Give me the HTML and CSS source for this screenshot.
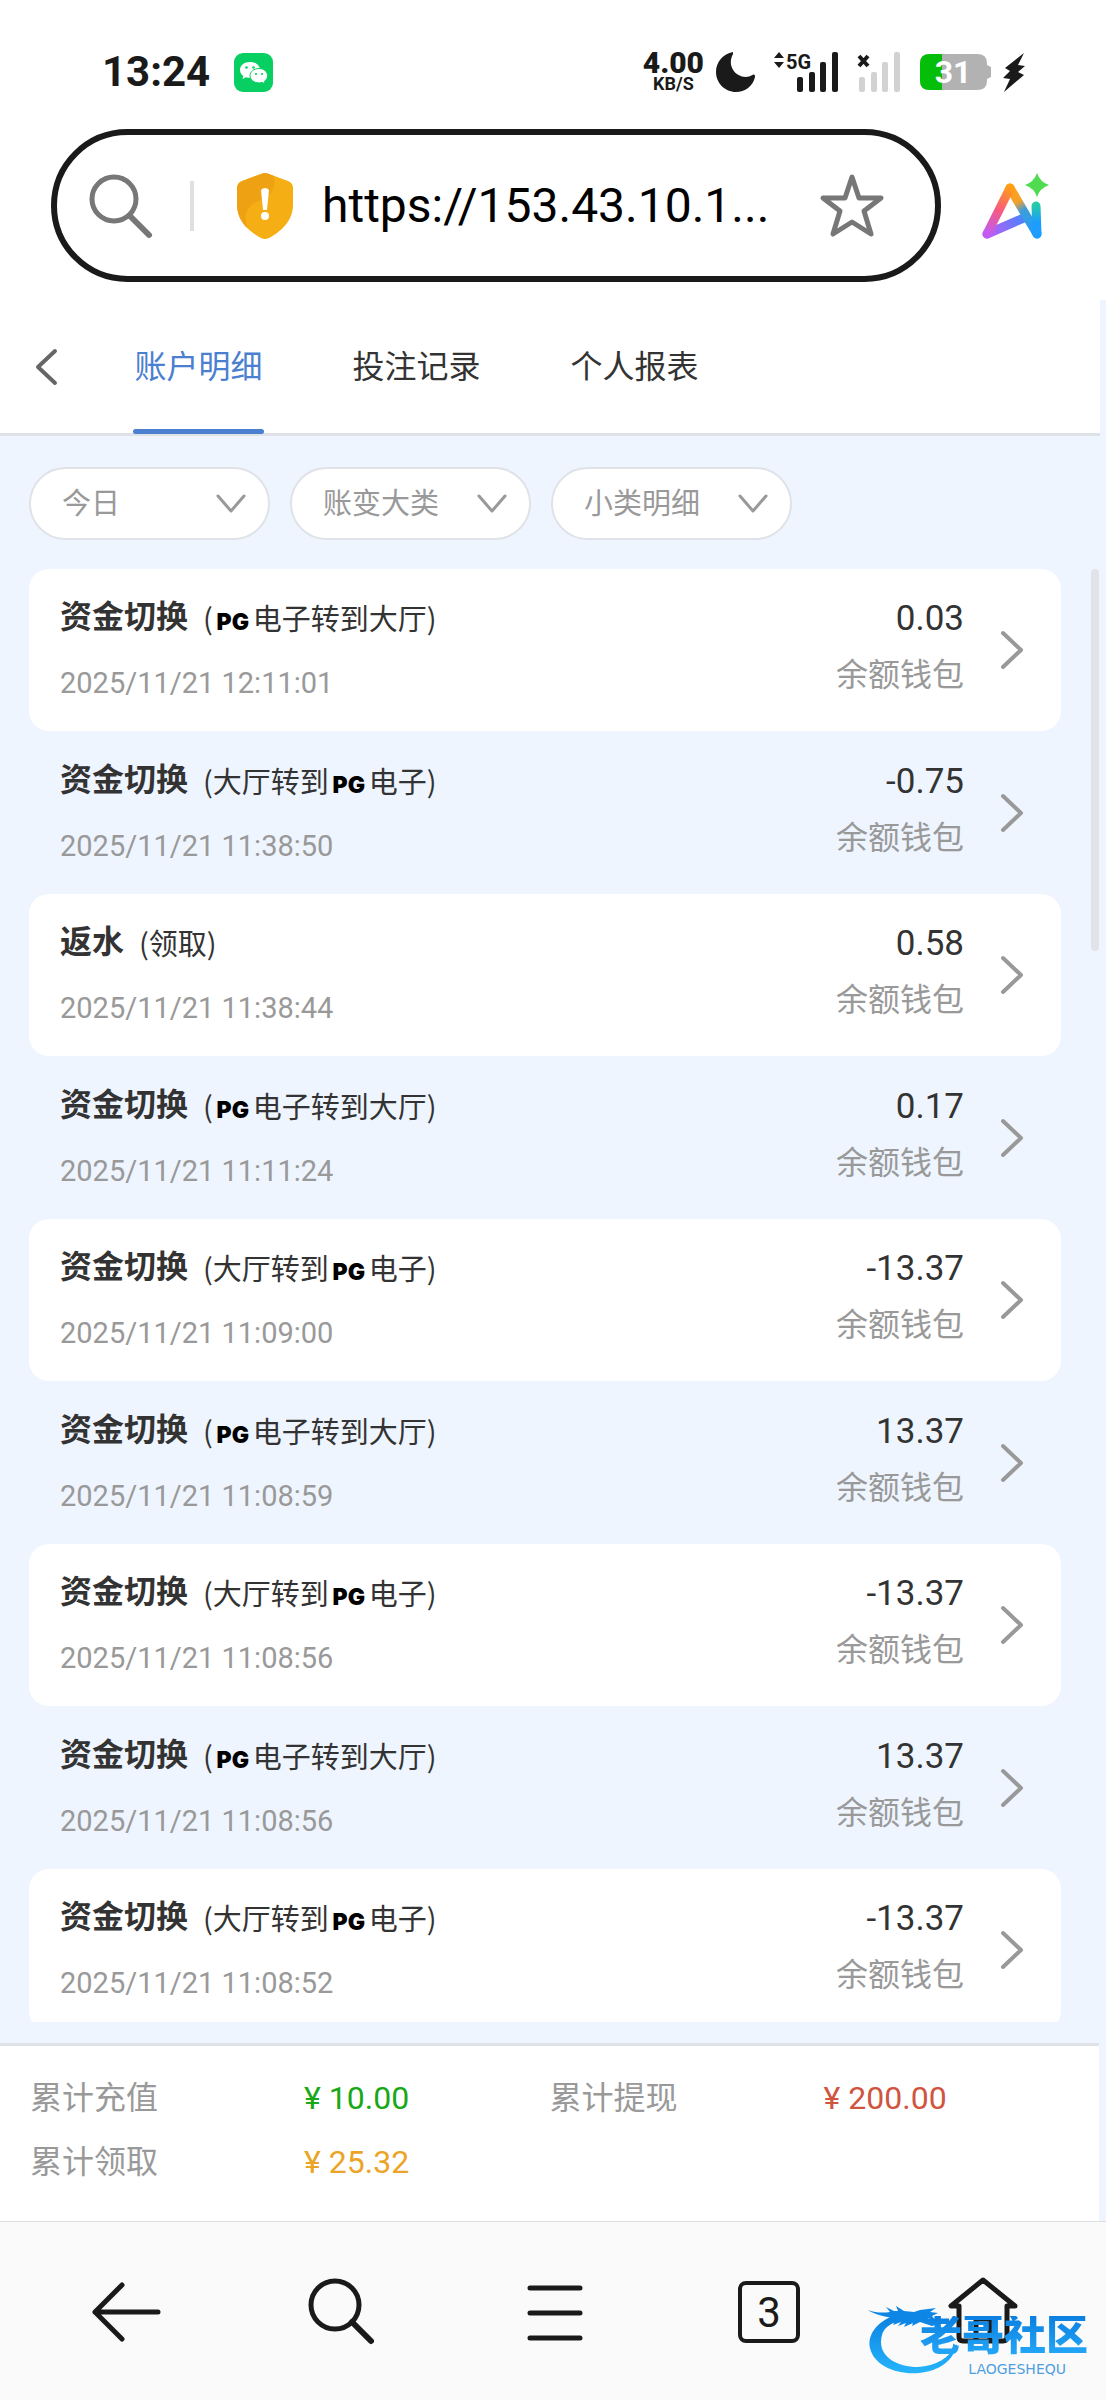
FILE: index.html
```html
<!DOCTYPE html>
<html lang="zh-CN">
<head>
<meta charset="utf-8">
<meta name="viewport" content="width=device-width, initial-scale=1">
<title>账户明细</title>
<link rel="stylesheet" href="styles.css">
</head>
<body>
<svg class="defs" aria-hidden="true">
  <symbol id="right" viewBox="0 0 24 40"><path d="M3 3 21 20 3 37" fill="none" stroke="#999" stroke-width="4" stroke-linecap="round" stroke-linejoin="round"/></symbol>
  <symbol id="down" viewBox="0 0 30 20"><path d="M2 2 15 17 28 2" fill="none" stroke="#999" stroke-width="3" stroke-linecap="round" stroke-linejoin="round"/></symbol>
</svg>

<div class="chrome">
  <div class="status">
    <span class="clock">13:24</span>
    <svg class="wechat" width="39" height="39" viewBox="0 0 39 39">
      <rect width="39" height="39" rx="9" fill="#07cf62"/>
      <path d="M16 9C10 9 6 12.500 6 17c0 2.500 1.300 4.600 3.300 6l-.8 3 3.500-1.800c1.300.4 2.700.6 4 .6 6 0 10-3.500 10-7.800S22 9 16 9z" fill="#fff"/>
      <path d="M25 15.500c-5 0-9 3.200-9 7.200s4 7.200 9 7.200c1 0 2.200-.2 3.200-.5l2.800 1.500-.6-2.600c2-1.400 3.200-3.300 3.200-5.600 0-4-3.800-7.200-8.600-7.200z" fill="#fff" stroke="#07cf62" stroke-width="1"/>
      <circle cx="12.500" cy="14.500" r="1.300" fill="#07cf62"/><circle cx="19.500" cy="14.500" r="1.300" fill="#07cf62"/><circle cx="22" cy="21" r="1.100" fill="#07cf62"/><circle cx="28" cy="21" r="1.100" fill="#07cf62"/>
    </svg>
    <div class="indicators">
      <span class="speed"><b>4.00</b><small>KB/S</small></span>
      <svg width="45" height="40" viewBox="0 0 45 40"><path d="M17 0C7 2 0 10 0 20c0 11 9 20 20 20 9 0 17-6 19-15 .4-2-1-3-2.500-2C25 30 9 17 17 2z" fill="#1a1a1a"/></svg>
      <svg width="72" height="40" viewBox="0 0 72 40" fill="#1a1a1a">
        <path d="M6 0l5 6H1zM6 16l5-6H1z"/>
        <text class="net" x="13" y="17">5G</text>
        <rect x="24" y="25" width="6" height="15" rx="2"/><rect x="36" y="20" width="6" height="20" rx="2"/><rect x="47" y="10" width="6" height="30" rx="2"/><rect x="59" y="0" width="6" height="40" rx="2"/>
      </svg>
      <svg width="51" height="40" viewBox="0 0 51 40">
        <path d="M2 4l9 10M11 4 2 14" stroke="#1a1a1a" stroke-width="4"/>
        <g fill="#d2d2d2"><rect x="2" y="25" width="6" height="15" rx="2"/><rect x="14" y="20" width="6" height="20" rx="2"/><rect x="25" y="10" width="6" height="30" rx="2"/><rect x="37" y="0" width="6" height="40" rx="2"/></g>
      </svg>
      <svg width="71" height="40" viewBox="0 0 71 40">
        <path d="M10 2H57q10 0 10 9v2l4 2v10l-4 2v2q0 9-10 9H10q-10 0-10-9V11Q0 2 10 2z" fill="#b2b2b2"/>
        <path d="M22 2H10Q0 2 0 11v18q0 9 10 9h12z" fill="#05be0a"/>
        <text class="charge" x="33" y="31" text-anchor="middle" fill="#fff">31</text>
      </svg>
      <svg width="22" height="40" viewBox="0 0 22 40"><path d="M21 1 2 16l5 3-7 7 7 1-6 13 20-17-6-3 7-6-7-1z" fill="#1a1a1a"/></svg>
    </div>
  </div>

  <div class="address-row">
    <form class="address">
      <svg width="64" height="64" viewBox="0 0 64 64" fill="none" stroke="#777" stroke-linecap="round"><circle cx="25" cy="25" r="22" stroke-width="5"/><path d="M42 43 60 61" stroke-width="6"/></svg>
      <span class="divider"></span>
      <svg class="shield" width="58" height="66" viewBox="0 0 58 66">
        <path d="M25 1q4-2 8 0L52 8q5 2 5 7v17c0 15-11 26-24 33q-4 2-8 0C12 58 1 47 1 32V15q0-5 5-7z" fill="#f5ae14"/>
        <path d="M25 1 6 8Q1 10 1 15v17c0 9 4 17 10 23-4-14 1-24 14-28C36 24 40 12 38 3L33 1q-4-2-8 0z" fill="#eb9c12" opacity=".7"/>
        <path d="M25 17q4-4 8 0l-2 20h-4z" fill="#fff"/><circle cx="29" cy="43" r="4" fill="#fff"/>
      </svg>
      <input class="url" type="text" aria-label="网址" value="https://153.43.10.1...">
      <button class="plain" type="button" aria-label="收藏"><svg width="66" height="66" viewBox="0 0 66 66"><path d="M33 4 40 25H62L45 38 52 61 33 49 14 61 21 38 4 25H26z" fill="none" stroke="#777" stroke-width="5" stroke-linejoin="round"/></svg></button>
    </form>
    <button class="plain" type="button" aria-label="AI">
      <svg width="72" height="70" viewBox="0 0 72 70" fill="none" stroke-width="9" stroke-linecap="round" stroke-linejoin="round">
        <defs>
          <linearGradient id="leg" gradientUnits="userSpaceOnUse" x1="30" y1="15" x2="7" y2="63"><stop offset="0" stop-color="#ffa010"/><stop offset=".5" stop-color="#f75a80"/><stop offset="1" stop-color="#c05cf5"/></linearGradient>
          <linearGradient id="base" gradientUnits="userSpaceOnUse" x1="7" y1="63" x2="46" y2="45"><stop offset="0" stop-color="#c05cf5"/><stop offset="1" stop-color="#4386ff"/></linearGradient>
          <linearGradient id="side" gradientUnits="userSpaceOnUse" x1="30" y1="17" x2="57" y2="63"><stop offset="0" stop-color="#ffa010"/><stop offset=".3" stop-color="#f3a02c"/><stop offset=".48" stop-color="#3f9dd8"/><stop offset="1" stop-color="#1c9dff"/></linearGradient>
          <linearGradient id="stem" gradientUnits="userSpaceOnUse" x1="56" y1="34" x2="58" y2="63"><stop offset="0" stop-color="#24cbaa"/><stop offset=".6" stop-color="#1c9dff"/></linearGradient>
        </defs>
        <path d="M7 63 46 46" stroke="url(#base)"/>
        <path d="M30 17 57 63" stroke="url(#side)"/>
        <path d="M57 63 56 35" stroke="url(#stem)"/>
        <path d="M30 17 7 63" stroke="url(#leg)"/>
        <path d="M57 2q3 9 12 12-9 3-12 12-3-9-12-12 9-3 12-12z" fill="#4fdc50"/>
      </svg>
    </button>
  </div>
</div>

<header class="tabs-bar">
  <button class="plain back" type="button" aria-label="返回"><svg width="24" height="38" viewBox="0 0 24 38"><path d="M20 3 3 19 20 35" fill="none" stroke="#666" stroke-width="4" stroke-linecap="round" stroke-linejoin="round"/></svg></button>
  <nav class="tabs">
    <a class="tab active" href="#account">账户明细</a>
    <a class="tab" href="#bets">投注记录</a>
    <a class="tab" href="#report">个人报表</a>
  </nav>
</header>

<div class="filters">
  <div class="filter"><select aria-label="日期"><option>今日</option></select><svg width="30" height="20"><use href="#down"/></svg></div>
  <div class="filter"><select aria-label="账变大类"><option>账变大类</option></select><svg width="30" height="20"><use href="#down"/></svg></div>
  <div class="filter"><select aria-label="小类明细"><option>小类明细</option></select><svg width="30" height="20"><use href="#down"/></svg></div>
</div>

<main class="records">
  <ul class="list">
    <li class="record"><div class="info"><p class="title"><b>资金切换</b><span>(<i class="pg">PG</i>电子转到大厅)</span></p><time>2025/11/21 12:11:01</time></div><div class="sum"><span class="amount">0.03</span><span class="wallet">余额钱包</span></div><svg width="24" height="40"><use href="#right"/></svg></li>
    <li class="record"><div class="info"><p class="title"><b>资金切换</b><span>(大厅转到<i class="pg">PG</i>电子)</span></p><time>2025/11/21 11:38:50</time></div><div class="sum"><span class="amount">-0.75</span><span class="wallet">余额钱包</span></div><svg width="24" height="40"><use href="#right"/></svg></li>
    <li class="record"><div class="info"><p class="title"><b>返水</b><span>(领取)</span></p><time>2025/11/21 11:38:44</time></div><div class="sum"><span class="amount">0.58</span><span class="wallet">余额钱包</span></div><svg width="24" height="40"><use href="#right"/></svg></li>
    <li class="record"><div class="info"><p class="title"><b>资金切换</b><span>(<i class="pg">PG</i>电子转到大厅)</span></p><time>2025/11/21 11:11:24</time></div><div class="sum"><span class="amount">0.17</span><span class="wallet">余额钱包</span></div><svg width="24" height="40"><use href="#right"/></svg></li>
    <li class="record"><div class="info"><p class="title"><b>资金切换</b><span>(大厅转到<i class="pg">PG</i>电子)</span></p><time>2025/11/21 11:09:00</time></div><div class="sum"><span class="amount">-13.37</span><span class="wallet">余额钱包</span></div><svg width="24" height="40"><use href="#right"/></svg></li>
    <li class="record"><div class="info"><p class="title"><b>资金切换</b><span>(<i class="pg">PG</i>电子转到大厅)</span></p><time>2025/11/21 11:08:59</time></div><div class="sum"><span class="amount">13.37</span><span class="wallet">余额钱包</span></div><svg width="24" height="40"><use href="#right"/></svg></li>
    <li class="record"><div class="info"><p class="title"><b>资金切换</b><span>(大厅转到<i class="pg">PG</i>电子)</span></p><time>2025/11/21 11:08:56</time></div><div class="sum"><span class="amount">-13.37</span><span class="wallet">余额钱包</span></div><svg width="24" height="40"><use href="#right"/></svg></li>
    <li class="record"><div class="info"><p class="title"><b>资金切换</b><span>(<i class="pg">PG</i>电子转到大厅)</span></p><time>2025/11/21 11:08:56</time></div><div class="sum"><span class="amount">13.37</span><span class="wallet">余额钱包</span></div><svg width="24" height="40"><use href="#right"/></svg></li>
    <li class="record"><div class="info"><p class="title"><b>资金切换</b><span>(大厅转到<i class="pg">PG</i>电子)</span></p><time>2025/11/21 11:08:52</time></div><div class="sum"><span class="amount">-13.37</span><span class="wallet">余额钱包</span></div><svg width="24" height="40"><use href="#right"/></svg></li>
  </ul>
  <span class="thumb"></span>
</main>

<dl class="summary">
  <div><dt>累计充值</dt><dd class="green">¥ 10.00</dd></div>
  <div><dt>累计提现</dt><dd class="red">¥ 200.00</dd></div>
  <div><dt>累计领取</dt><dd class="gold">¥ 25.32</dd></div>
</dl>

<footer class="toolbar">
  <button class="plain" type="button" aria-label="后退"><svg width="72" height="72" viewBox="0 0 72 72"><path d="M31 9 4 36 31 63M4 36H67"/></svg></button>
  <button class="plain" type="button" aria-label="搜索"><svg width="72" height="72" viewBox="0 0 72 72"><circle cx="30" cy="29" r="24"/><path d="M47 46 66 65" stroke-width="6"/></svg></button>
  <button class="plain" type="button" aria-label="菜单"><svg width="72" height="72" viewBox="0 0 72 72"><path d="M11 12H61M11 37H61M11 62H61"/></svg></button>
  <button class="plain" type="button" aria-label="标签页"><span class="count">3</span></button>
  <button class="plain" type="button" aria-label="主页"><svg width="72" height="72" viewBox="0 0 72 72"><path d="M36 4 4 30H12V61q0 4 4 4H56q4 0 4-4V30H68zM29 65V43H43V65"/></svg></button>
  <div class="mark">
    <svg width="96" height="76" viewBox="0 0 96 76">
      <defs><linearGradient id="sea" x1="0" y1="0" x2="0" y2="1"><stop offset="0" stop-color="#0b7fe0"/><stop offset="1" stop-color="#25b4fb"/></linearGradient></defs>
      <path d="M36 13C12 19 1 34 4 48c4 18 27 27 49 25 21-2 35-13 38-29-8 14-21 22-39 23-21 0-37-10-37-25 0-13 8-20 24-22z" fill="url(#sea)"/>
      <path d="M2 10c8 3 15 3 22 2l-4-5 8 4h4l-2-5 8 5 10 1 6-2 16-2-6 4 8 1-6 3 3 4-8-2 9 7-4 1-12-4-8 4 1-3-9 4 2-4-8 3 3-4-8 3 3-6C18 16 9 15 2 10z" fill="#0d86e5"/>
    </svg>
    <b>老哥社区</b>
    <small>LAOGESHEQU</small>
  </div>
</footer>
</body>
</html>
```
FILE: styles.css
```css
* { box-sizing: border-box; margin: 0; padding: 0; }

body {
  display: flex;
  flex-direction: column;
  height: 100vh;
  background: #eef5ff;
  color: #333;
  font-family: Roboto, "Noto Sans CJK SC", sans-serif;
  font-size: 32px;
  line-height: 40px;
}

svg { display: block; flex: none; overflow: visible; }
.defs { position: absolute; width: 0; height: 0; }
.plain { border: 0; background: none; font: inherit; color: inherit; }

/* Phone status bar and address bar */
.chrome { background: #fff; padding-bottom: 18px; }
.status { display: flex; align-items: center; padding: 52px 81px 37px 102px; color: #1a1a1a; }
.clock { font-size: 42px; font-weight: 700; }
.wechat { margin-left: 24px; }
.indicators { display: flex; align-items: center; gap: 12px; height: 40px; margin-left: auto; }
.speed { display: flex; flex-direction: column; align-items: center; font-weight: 700; }
.speed b { font-size: 30px; line-height: 24px; }
.speed small { font-size: 18px; line-height: 18px; }
.net { font-size: 20px; font-weight: 700; }
.charge { font-size: 32px; font-weight: 700; }

.address-row { display: flex; align-items: center; gap: 39px; padding: 0 54px 0 51px; }
.address {
  display: flex;
  align-items: center;
  flex: 1;
  min-width: 0;
  height: 153px;
  padding: 0 50px 0 32px;
  border: 6px solid #1a1a1a;
  border-radius: 77px;
}
.divider { width: 4px; height: 50px; margin: 0 42px 0 37px; background: #e0e0e0; }
.url {
  flex: 1;
  min-width: 0;
  margin: 0 28px;
  border: 0;
  background: none;
  color: #000;
  font: 48px/64px Roboto, sans-serif;
}

/* Tabs */
.tabs-bar {
  display: flex;
  align-items: stretch;
  height: 136px;
  margin-right: 6px;
  border-bottom: 3px solid #dfe2e6;
  background: #fff;
}
.back { width: 133px; padding-left: 35px; }
.tabs { display: flex; gap: 87px; }
.tab {
  position: relative;
  display: flex;
  align-items: center;
  justify-content: center;
  width: 131px;
  color: #333;
  text-decoration: none;
}
.tab.active { color: #4a80cf; }
.tab.active::after {
  content: "";
  position: absolute;
  right: 0;
  bottom: -1px;
  left: 0;
  height: 5px;
  border-radius: 3px;
  background: #4a80cf;
}

/* Filters */
.filters { display: flex; gap: 20px; padding: 31px 29px 29px; }
.filter { display: grid; align-items: center; width: 241px; }
.filter > * { grid-area: 1 / 1; }
.filter svg { justify-self: end; margin-right: 24px; pointer-events: none; }
.filter select {
  width: 100%;
  height: 73px;
  padding: 0 60px 0 31px;
  border: 2px solid #dfe2e6;
  border-radius: 37px;
  appearance: none;
  background: #fff;
  color: #999;
  font: 29px/40px Roboto, "Noto Sans CJK SC", sans-serif;
}

/* Records */
.records { position: relative; flex: 1; min-height: 0; padding: 0 45px 0 29px; }
.list { height: 100%; overflow: hidden; list-style: none; }
.record {
  display: flex;
  align-items: center;
  height: 163px;
  padding: 0 37px 0 31px;
}
.record:nth-child(odd) { height: 162px; border-radius: 20px; background: #fff; }
.info { display: flex; flex: 1; flex-direction: column; gap: 26px; }
.title { display: flex; gap: 15px; height: 40px; }
.title span { font-size: 29px; font-family: "Noto Sans CJK SC", sans-serif; }
.pg {
  display: inline-block;
  width: 40px;
  color: #000;
  font: 900 23px/24px Inter, sans-serif;
  text-align: center;
}
time { color: #999; font-size: 29px; }
.sum { display: flex; flex-direction: column; gap: 16px; padding-bottom: 6px; margin-right: 36px; text-align: right; }
.amount { font-size: 35px; }
.wallet { color: #999; }
.thumb {
  position: absolute;
  top: 0;
  right: 7px;
  width: 8px;
  height: 382px;
  border-radius: 4px;
  background: #e2e3e9;
}

/* Totals */
.summary {
  display: grid;
  grid-template-columns: 1fr 1fr;
  margin: 21px 7px 0 0;
  padding: 20px 30px 27px;
  border-top: 3px solid #dfe2e6;
  background: #fff;
  line-height: 64px;
}
.summary div { display: flex; }
.summary dt { width: 274px; color: #999; }
.green { color: #18a818; }
.red { color: #d0553f; }
.gold { color: #eba526; }

/* Browser toolbar */
.toolbar {
  position: relative;
  display: grid;
  grid-template-columns: repeat(5, 1fr);
  align-items: center;
  justify-items: center;
  height: 179px;
  padding: 2px 16px 0 20px;
  border-top: 1px solid #dcdee2;
  background: #fafafa;
}
.toolbar button svg { fill: none; stroke: #1a1a1a; stroke-width: 5; stroke-linecap: round; stroke-linejoin: round; }
.count {
  display: block;
  width: 62px;
  height: 62px;
  border: 4px solid #1a1a1a;
  border-radius: 8px;
  color: #1a1a1a;
  font-size: 42px;
  line-height: 56px;
}

/* Site watermark floating over the toolbar */
.mark { position: absolute; right: 18px; bottom: 22px; width: 222px; height: 78px; }
.mark svg, .mark b, .mark small { position: absolute; }
.mark svg { left: 0; top: 0; }
.mark b {
  right: 0;
  top: 16px;
  background: linear-gradient(#0b7fe0, #25a8f8);
  background-clip: text;
  color: transparent;
  font-size: 42px;
  font-weight: 900;
}
.mark small { right: 22px; bottom: 1px; color: #4f9fe0; font: 14px/16px "DejaVu Sans", sans-serif; }
```
